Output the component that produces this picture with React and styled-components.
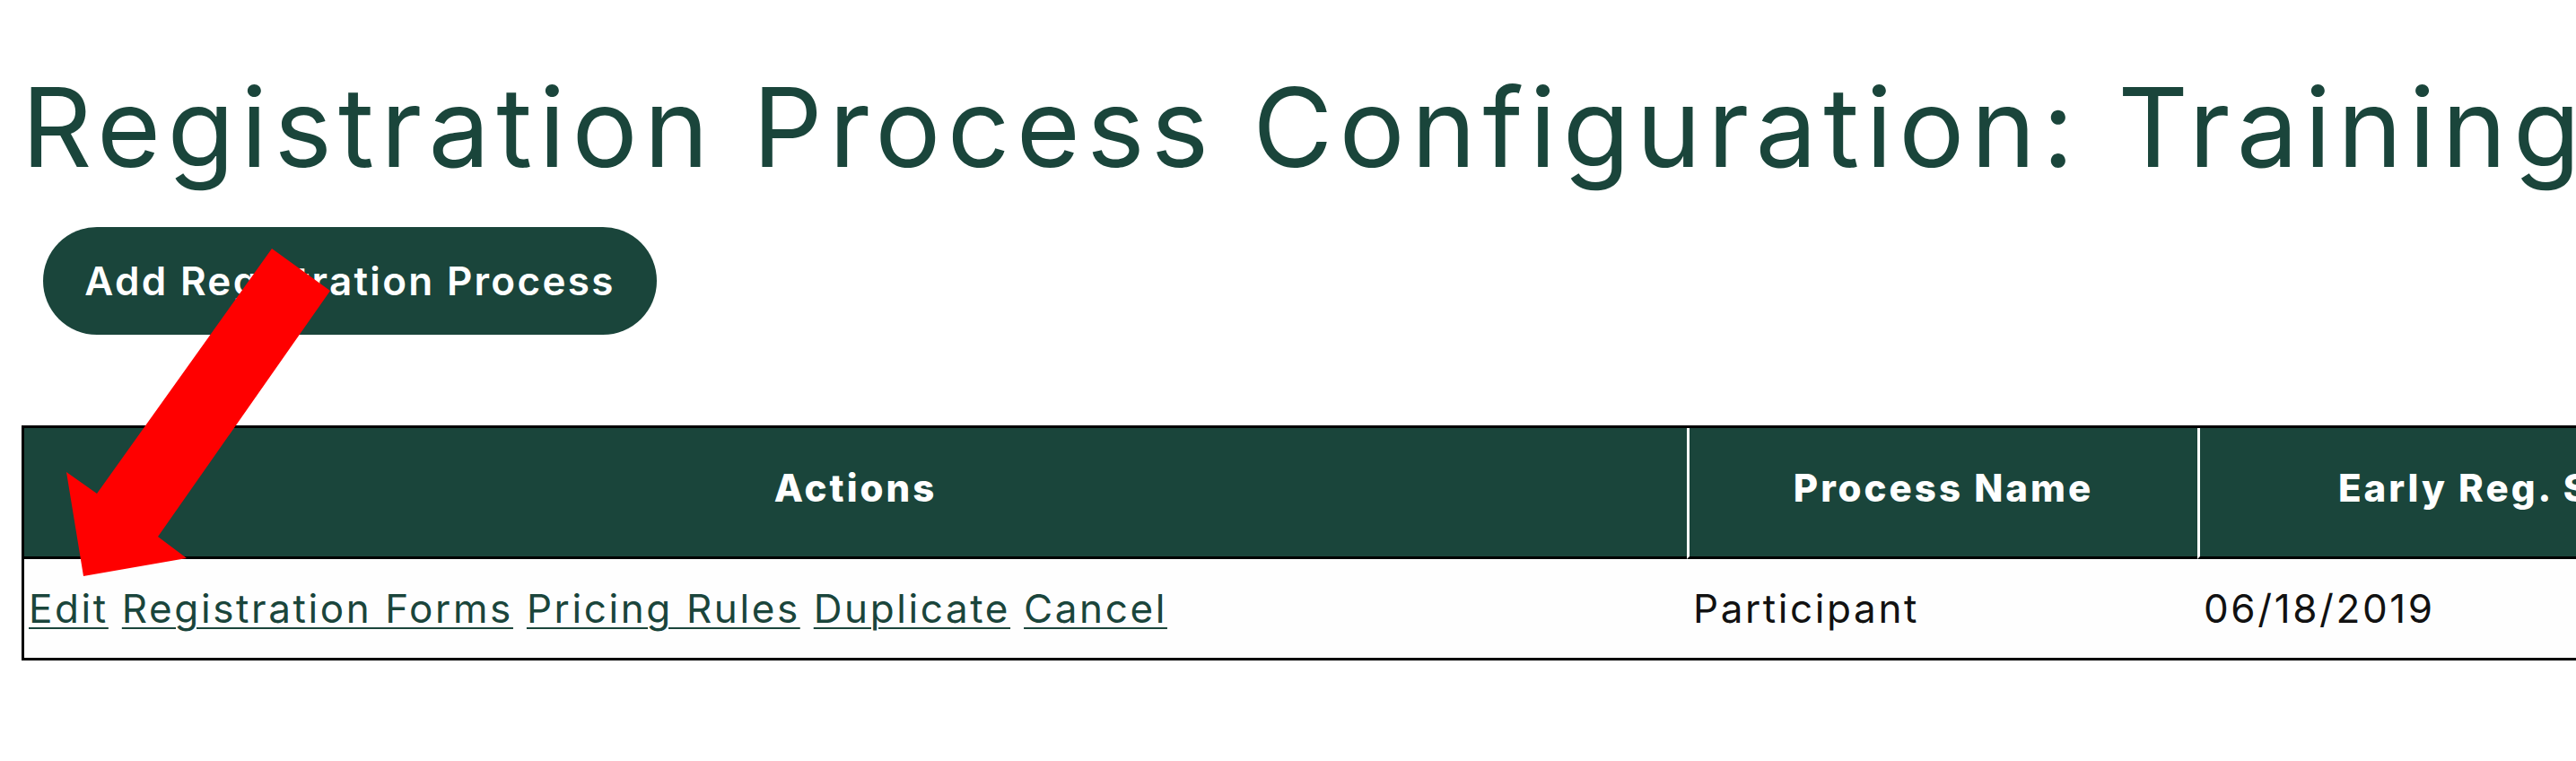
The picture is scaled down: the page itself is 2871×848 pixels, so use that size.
import React from 'react';
import styled, { createGlobalStyle } from 'styled-components';

const GlobalStyle = createGlobalStyle`
  html, body {
    margin: 0;
    padding: 0;
    background: #ffffff;
    overflow: hidden;
  }
  body {
    font-family: Inter, "Liberation Sans", sans-serif;
  }
`;

const green = '#1a453b';

const Page = styled.div`
  position: relative;
  width: 2871px;
  height: 848px;
  padding: 81px 0 0 24px;
  box-sizing: border-box;
  overflow: hidden;
`;

const Title = styled.h1`
  margin: 0;
  font-family: Inter, "Liberation Sans", sans-serif;
  font-weight: 400;
  font-size: 122px;
  line-height: 1;
  letter-spacing: 7.3px;
  color: ${green};
  white-space: nowrap;
`;

const AddButton = styled.button`
  display: flex;
  align-items: center;
  justify-content: center;
  width: 684px;
  height: 120px;
  margin: 50px 0 0 24px;
  padding: 0;
  border: none;
  border-radius: 60px;
  background: ${green};
  color: #ffffff;
  font-family: Inter, "Liberation Sans", sans-serif;
  font-weight: 600;
  font-size: 44px;
  letter-spacing: 2.3px;
  white-space: nowrap;
  cursor: pointer;
`;

const Table = styled.div`
  display: grid;
  grid-template-columns: 1853px 569px 800px 700px;
  width: max-content;
  margin-top: 101px;
  border: 3px solid #000000;
`;

const HeadCell = styled.div`
  display: flex;
  align-items: center;
  justify-content: center;
  height: 146px;
  padding-bottom: 11px;
  box-sizing: border-box;
  background: ${green};
  color: #ffffff;
  font-weight: 800;
  font-size: 42px;
  letter-spacing: 3px;
  white-space: nowrap;
  border-bottom: 3px solid #000000;
  border-left: ${(p) => (p.$first ? 'none' : '3px solid #ffffff')};
`;

const BodyCell = styled.div`
  display: flex;
  align-items: center;
  height: 110px;
  padding-left: ${(p) => (p.$first ? '5px' : '7px')};
  background: #fefefe;
  color: #111111;
  font-size: 44px;
  letter-spacing: 2.6px;
  white-space: nowrap;
`;

const ActionLink = styled.a`
  color: ${green};
  text-decoration: underline;
  text-underline-offset: 5px;
  text-decoration-thickness: 2px;
  cursor: pointer;
`;

const Arrow = styled.svg`
  position: absolute;
  left: 0;
  top: 0;
  pointer-events: none;
`;

const actions = ['Edit', 'Registration Forms', 'Pricing Rules', 'Duplicate', 'Cancel'];
const headers = ['Actions', 'Process Name', 'Early Reg. Start Date', 'Early Reg. End Date'];

export default function App() {
  return (
    <>
      <GlobalStyle />
      <Page>
        <Title>Registration Process Configuration: Training</Title>
        <AddButton>Add Registration Process</AddButton>
        <Table>
          {headers.map((h, i) => (
            <HeadCell key={h} $first={i === 0}>{h}</HeadCell>
          ))}
          <BodyCell $first>
            <span>
              {actions.map((a, i) => (
                <React.Fragment key={a}>
                  {i > 0 && ' '}
                  <ActionLink>{a}</ActionLink>
                </React.Fragment>
              ))}
            </span>
          </BodyCell>
          <BodyCell>Participant</BodyCell>
          <BodyCell>06/18/2019</BodyCell>
          <BodyCell>06/30/2019</BodyCell>
        </Table>
        <Arrow width="400" height="700" viewBox="0 0 400 700">
          <polygon
            points="303,277 368,324 176,598 208,622 93,642 74,526 108,550"
            fill="#ff0000"
          />
        </Arrow>
      </Page>
    </>
  );
}
